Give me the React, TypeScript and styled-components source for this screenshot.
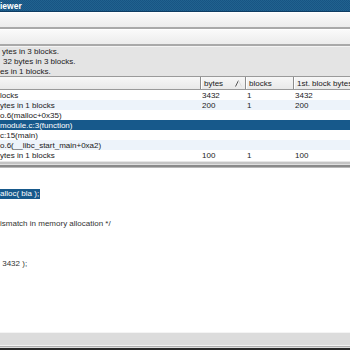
import styled, { createGlobalStyle } from 'styled-components'

const GlobalStyle = createGlobalStyle`
  html, body {
    margin: 0;
    padding: 0;
    background: #ffffff;
  }
  body {
    font-family: 'Liberation Sans', Arial, sans-serif;
    font-size: 8px;
    color: #1a1a1a;
  }
`

const Window = styled.div`
  width: 350px;
  height: 350px;
  display: flex;
  flex-direction: column;
  overflow: hidden;
  background: #ffffff;
`

const TitleBar = styled.div`
  height: 12px;
  flex: none;
  display: flex;
  align-items: center;
  padding-left: 0;
  background-color: #1c5b8b;
  background-image: repeating-conic-gradient(#20628f 0 25%, #185483 0 50%);
  background-size: 2px 2px;
  border-bottom: 1px solid #0f3d63;
  box-sizing: border-box;
  color: #ffffff;
  font-weight: bold;
  font-size: 8.5px;
`

const Toolbar = styled.div`
  height: 17px;
  flex: none;
  box-sizing: border-box;
  background: linear-gradient(#fafafa, #ececec);
  border-top: 1px solid #ffffff;
  border-bottom: 2px solid #a9a9a9;
`

const Summary = styled.div`
  height: 30px;
  flex: none;
  box-sizing: border-box;
  background: #e4e4e4;
  border-top: 1px solid #f4f4f4;
  white-space: nowrap;
`

const SummaryLine = styled.div<{ $indent: number }>`
  height: 10px;
  line-height: 9px;
  padding-left: ${p => p.$indent}px;
`

const HeaderRow = styled.div`
  height: 14px;
  flex: none;
  display: grid;
  grid-template-columns: 200px 45px 48px 1fr;
  box-sizing: border-box;
  background: linear-gradient(#f7f7f7, #e9e9e9);
  border-top: 1px solid #9a9a9a;
  border-bottom: 1px solid #9a9a9a;
`

const HeaderCell = styled.div`
  display: flex;
  align-items: center;
  gap: 12px;
  padding-left: 3px;
  border-left: 1px solid #8c8c8c;
  box-shadow: inset 1px 0 0 #ffffff;
  white-space: nowrap;
  overflow: hidden;
  &:first-child {
    border-left: none;
    box-shadow: none;
  }
`

const Rows = styled.div`
  flex: none;
  display: flex;
  flex-direction: column;
`

const Row = styled.div<{ $alt?: boolean; $selected?: boolean }>`
  height: 10px;
  line-height: 11px;
  display: grid;
  grid-template-columns: 200px 45px 48px 1fr;
  white-space: nowrap;
  background: ${p => (p.$selected ? '#17598b' : p.$alt ? '#edf3fa' : '#ffffff')};
  color: ${p => (p.$selected ? '#ffffff' : '#1a1a1a')};
`

const Cell = styled.div`
  overflow: hidden;
  padding-left: 2px;
  &:first-child {
    padding-left: 0;
  }
`

const Splitter = styled.div`
  height: 8px;
  flex: none;
  background: linear-gradient(
    #ffffff 0 1px,
    #e6e6e6 1px 2px,
    #c4c4c4 2px 4px,
    #e0e0e0 4px 5px,
    #8a8a8a 5px 7px,
    #b8b8b8 7px 8px
  );
`

const Editor = styled.div`
  flex: 1;
  background: #ffffff;
  padding-top: 1px;
  white-space: pre;
  color: #333333;
  overflow: hidden;
`

const EditorLine = styled.div`
  height: 10px;
  line-height: 10px;
`

const Mark = styled.span`
  background: #17598b;
  color: #ffffff;
  display: inline-block;
  height: 10px;
  padding-right: 1px;
`

const StatusBar = styled.div`
  height: 18px;
  flex: none;
  box-sizing: border-box;
  background: linear-gradient(
    #f4f4f4 0 1px,
    #dcdcdc 1px 13px,
    #f2f2f2 13px 14px,
    #b0b0b0 14px 15px,
    #dcdcdc 15px 16px,
    #2a2a2a 16px 18px
  );
`

const SortArrow = () => (
  <svg width="7" height="7" viewBox="0 0 7 7">
    <path d="M0.5 6.5 L3.5 0.5" stroke="#555" strokeWidth="1" fill="none" />
    <path d="M3.5 0.5 L6.5 6.5" stroke="#dcdcdc" strokeWidth="1" fill="none" />
  </svg>
)

const summary = [
  { text: 'ytes in 3 blocks.', indent: 2 },
  { text: '32 bytes in 3 blocks.', indent: 3 },
  { text: 'es in 1 blocks.', indent: 0 },
]

const rows = [
  { name: 'locks', bytes: '3432', blocks: '1', first: '3432' },
  { name: 'ytes in 1 blocks', bytes: '200', blocks: '1', first: '200' },
  { name: 'o.6(malloc+0x35)' },
  { name: 'module.c:3(function)', selected: true },
  { name: 'c:15(main)' },
  { name: 'o.6(__libc_start_main+0xa2)' },
  { name: 'ytes in 1 blocks', bytes: '100', blocks: '1', first: '100' },
]

const code: Array<string | null> = [
  '',
  '',
  null,
  '',
  '',
  'ismatch in memory allocation */',
  '',
  '',
  '',
  ' 3432 );',
]

export default function App() {
  return (
    <>
      <GlobalStyle />
      <Window>
        <TitleBar>iewer</TitleBar>
        <Toolbar />
        <Toolbar />
        <Summary>
          {summary.map((s, i) => (
            <SummaryLine key={i} $indent={s.indent}>
              {s.text}
            </SummaryLine>
          ))}
        </Summary>
        <HeaderRow>
          <HeaderCell />
          <HeaderCell>
            bytes <SortArrow />
          </HeaderCell>
          <HeaderCell>blocks</HeaderCell>
          <HeaderCell>1st. block bytes</HeaderCell>
        </HeaderRow>
        <Rows>
          {rows.map((r, i) => (
            <Row key={i} $alt={i % 2 === 1} $selected={r.selected}>
              <Cell>{r.name}</Cell>
              <Cell>{r.bytes}</Cell>
              <Cell>{r.blocks}</Cell>
              <Cell>{r.first}</Cell>
            </Row>
          ))}
        </Rows>
        <Splitter />
        <Editor>
          {code.map((line, i) => (
            <EditorLine key={i}>{line === null ? <Mark>alloc( bla );</Mark> : line}</EditorLine>
          ))}
        </Editor>
        <StatusBar />
      </Window>
    </>
  )
}
